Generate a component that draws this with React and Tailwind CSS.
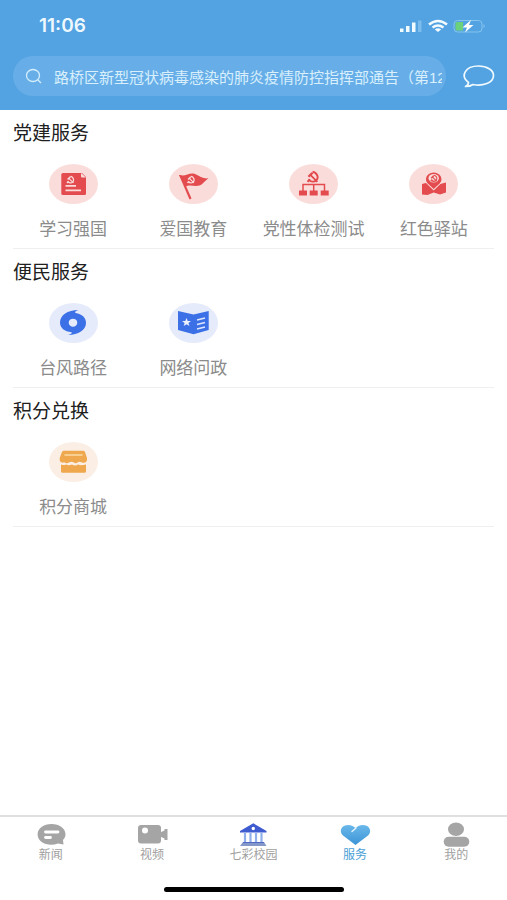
import React from "react";

function Emblem({ x, y, size, color }) {
  return (
    <svg x={x} y={y} width={size} height={size} viewBox="0 0 24 24" fill="none" stroke={color}>
      <path d="M12 2C21 4 24 13 19 18C15 22 9 21 5 17" strokeWidth="3.6" />
      <path d="M7 16L3 21" strokeWidth="4" />
      <path d="M8 8L21 21" strokeWidth="3.4" />
      <path d="M3 10L10 3L14 5L6 13Z" fill={color} stroke="none" />
    </svg>
  );
}

const red = "#e34b4e";
const pink = "#fadddb";

const StudyIcon = () => (
  <>
    <path d="M14 9H33L37 13V29.500Q37 31 35.500 31H14Q12.300 31 12.300 29.500V10.500Q12.300 9 14 9Z" fill={red} />
    <path d="M32 9L37 13.500H33Q32 13.500 32 12.500Z" fill={pink} />
    <Emblem x={17} y={11.500} size={8.500} color={pink} />
    <path d="M16.500 21.800H27M16.500 26.300H32" stroke={pink} strokeWidth="1.700" />
  </>
);

const FlagIcon = () => (
  <>
    <path d="M10 11C17 13 20 8 26 10C31 12 34 15 39.500 14.300C36 16.500 34 20.500 30.500 21.600C25 23 21 20 16.500 22.700Z" fill={red} />
    <path d="M10 11L12.500 11.500L22.500 34.500L20.500 35.500Z" fill={red} />
    <Emblem x={17.500} y={11.500} size={8.500} color={pink} />
  </>
);

const TreeIcon = () => (
  <>
    <Emblem x={17} y={6.500} size={13} color={red} />
    <path d="M14 27V20.500H35.500V27M24.700 20.500V27" fill="none" stroke={red} strokeWidth="1.500" />
    <path d="M10 26.500H18V31.500H10ZM20.700 26.500H28.700V31.500H20.700ZM31.700 26.500H39.700V31.500H31.700Z" fill={red} />
  </>
);

const MapIcon = () => (
  <>
    <path d="M13 20L18.500 18.500L24.700 20.500L31 20L37 18.500V28.500L31 30.500L24.700 28.500L18.500 31L13 30.500Z" fill={red} />
    <path d="M24.700 26.500L16.500 18.500Q14.500 7.500 24.700 6Q35 7.500 33 18.500Z" fill={pink} />
    <path d="M24.700 25L18.500 19.300A7.800 6.700 0 1 1 30.900 19.300Z" fill={red} />
    <ellipse cx="24.700" cy="14.300" rx="5.200" ry="4.200" fill={pink} />
    <Emblem x={20.700} y={10.300} size={8} color={red} />
  </>
);

const TyphoonIcon = () => (
  <path
    fillRule="evenodd"
    d="M29.500 7C26.500 8 25.500 9.300 26.500 10C33 11 37 14.500 37 20C37 27 29.500 31.800 19 32C22.500 31 23.500 30 22.500 29.300C15.500 28.500 11 25 11 19.500C11 12 18.500 7.200 29.500 7ZM24 15.700A4.300 4 0 1 0 24 23.700A4.300 4 0 1 0 24 15.700Z"
    fill="#3b70e6"
  />
);

const BookIcon = () => (
  <>
    <path d="M9 8L24.500 11.500L39.700 8V27L24.500 31.300L9 27Z" fill="#3b70e6" />
    <path d="M17.500 15L18.700 18H22L19.400 20L20.500 23L17.500 21.200L14.700 23L15.600 20L13 18H16.300Z" fill="#edf1ff" />
    <path d="M28 17L36 15M28 21.500L36 19.500M28 26L36 24" stroke="#dfe7ff" strokeWidth="1.600" />
  </>
);

const ShopIcon = () => (
  <>
    <path d="M15 8.700H34Q35.500 8.700 36 10L38 16V18.500Q36.500 22 32.500 20.300Q30.500 19 28.500 20.500Q26.500 22.200 24.500 20.300Q22.500 19 20 20.500Q17 22 15.500 20.300Q11.500 21.500 10.700 18.500V16L13 10Q13.500 8.700 15 8.700Z" fill="#efa84e" />
    <path d="M16 13H33" stroke="#fbdca8" strokeWidth="1.500" strokeLinecap="round" />
    <path d="M12 22.500Q15 23.500 17 22.500Q20 24 23 22.500Q26 24.500 29 22.500Q32 24 37 22.500V29.500Q37 30.700 35.500 30.700H13.500Q12 30.700 12 29.500Z" fill="#efa84e" />
  </>
);

const sections = [
  {
    title: "党建服务",
    items: [
      { label: "学习强国", Icon: StudyIcon, tint: "bg-[#fadddb]" },
      { label: "爱国教育", Icon: FlagIcon, tint: "bg-[#fadddb]" },
      { label: "党性体检测试", Icon: TreeIcon, tint: "bg-[#fadddb]" },
      { label: "红色驿站", Icon: MapIcon, tint: "bg-[#fadddb]" },
    ],
  },
  {
    title: "便民服务",
    items: [
      { label: "台风路径", Icon: TyphoonIcon, tint: "bg-[#e5ebfa]" },
      { label: "网络问政", Icon: BookIcon, tint: "bg-[#e5ebfa]" },
    ],
  },
  {
    title: "积分兑换",
    items: [{ label: "积分商城", Icon: ShopIcon, tint: "bg-[#fbeee4]" }],
  },
];

const NewsIcon = () => (
  <>
    <path d="M16.500 3C24.500 3 30.500 7.500 30.500 13.500C30.500 16 29 18 28 19L28.500 23.500L23 22.500C14 26 2.600 22 2.600 13.500C2.600 7.500 8.500 3 16.500 3Z" fill="#a5a5a5" />
    <path d="M10.500 11H23M10.500 16.500H15.500" stroke="#fff" strokeWidth="2.800" strokeLinecap="round" />
  </>
);

const VideoIcon = () => (
  <>
    <rect x="2" y="4" width="23" height="18.500" rx="3" fill="#a5a5a5" />
    <path d="M24 11.500L28.500 9.500V8H31.500V19H28.500V17.500L24 15.500Z" fill="#a5a5a5" />
    <circle cx="9" cy="9.500" r="3" fill="#fff" />
  </>
);

const SchoolIcon = () => (
  <>
    <path d="M16.300 2.300L29.500 10V11.500H3V10Z" fill="#3f5bd0" />
    <circle cx="16.300" cy="7.500" r="1.700" fill="#fff" />
    <path d="M8 12V21M13.500 12V21M19 12V21M24.500 12V21" stroke="#8fb0ec" strokeWidth="2.200" />
    <path d="M6 21H27L29.500 25H3Z" fill="#8497c9" />
    <path d="M6 21.500H27" stroke="#5069c6" />
  </>
);

const HeartIcon = () => (
  <>
    <defs>
      <linearGradient id="heart" x1="0" y1="0" x2="0" y2="1">
        <stop offset="0" stopColor="#6ab8ea" />
        <stop offset="1" stopColor="#3c94d6" />
      </linearGradient>
    </defs>
    <path d="M16.500 24L4 14.500C-0.500 10.500 2.500 4 9 4C12.500 4 15 5.500 16.500 7C18 5.500 20.500 4 24 4C30.500 4 33.500 10.500 29 14.500Z" fill="url(#heart)" />
    <path d="M17 7L13 10.500" stroke="#e6f5fd" strokeWidth="1.400" strokeLinecap="round" />
  </>
);

const ProfileIcon = () => (
  <>
    <ellipse cx="16" cy="8.300" rx="8" ry="6.700" fill="#a5a5a5" />
    <rect x="3.700" y="15.700" width="25.600" height="10" rx="5" fill="#a5a5a5" />
  </>
);

const tabs = [
  { label: "新闻", Icon: NewsIcon },
  { label: "视频", Icon: VideoIcon },
  { label: "七彩校园", Icon: SchoolIcon },
  { label: "服务", Icon: HeartIcon, active: true },
  { label: "我的", Icon: ProfileIcon },
];

function StatusBar() {
  return (
    <div className="flex h-13 items-center justify-between pr-5 pl-[39px]">
      <span className="font-['Inter','Liberation_Sans',sans-serif] text-[19px] leading-7 font-semibold text-[#eef9ff]">11:06</span>
      <svg width="88" height="16" viewBox="0 0 88 16" fill="none" aria-hidden="true">
        <path d="M1 10.500H4.500V14H1ZM7 8H10.500V14H7ZM13 4.500H16.500V14H13Z" fill="#f2fbff" />
        <path d="M19 2.500H22.500V14H19Z" fill="#7bbcec" />
        <path d="M30 6.500Q39 -0.500 48 6.500" stroke="#f2fbff" strokeWidth="2.600" />
        <path d="M33.500 9.500Q39 5.500 44.500 9.500" stroke="#f2fbff" strokeWidth="2.400" />
        <path d="M39 14L35.800 11.500Q39 9 42.200 11.500Z" fill="#f2fbff" />
        <rect x="55" y="2.500" width="28" height="11.500" rx="3.500" stroke="#86c6ee" />
        <path d="M58 4H64V12.500H58Q56.500 12.500 56.500 11V5.500Q56.500 4 58 4Z" fill="#6bd17b" />
        <path d="M84.500 6Q87 8 84.500 10Z" fill="#86c6ee" />
        <path d="M72 2L63.500 9.500H68L66 14.500L74.500 7H70Z" fill="#fff" />
      </svg>
    </div>
  );
}

export default function App() {
  return (
    <div className="flex min-h-screen flex-col bg-white font-['Liberation_Sans','Noto_Sans_CJK_SC',sans-serif]">
      <header className="bg-[#53a2e1] pb-[14px]">
        <StatusBar />
        <div className="flex items-center gap-4 pt-1 pr-3 pl-[13px]">
          <label className="flex h-10 min-w-0 flex-1 items-center gap-3 rounded-full bg-[#67aee8] pr-1 pl-3">
            <svg width="17" height="16" viewBox="0 0 17 16" fill="none" stroke="#d3eefb" strokeWidth="1.300" aria-hidden="true">
              <ellipse cx="8" cy="7.500" rx="6.500" ry="6" />
              <path d="M12.500 11.500L16 15" />
            </svg>
            <input
              type="text"
              aria-label="搜索"
              defaultValue="路桥区新型冠状病毒感染的肺炎疫情防控指挥部通告（第12号）"
              className="h-6 min-w-0 flex-1 bg-transparent text-[15px] text-[#d9f0fc] outline-none"
            />
          </label>
          <button type="button" aria-label="消息" className="shrink-0">
            <svg width="33" height="24" viewBox="0 0 33 24" fill="none" stroke="#effaff" strokeWidth="1.700" strokeLinejoin="round">
              <path d="M6.500 18.500C-2 12 3 2 16.500 2C25 2 31.500 6 31.500 11.500C31.500 19 20.500 22.500 11 20.500C9 22 6 22.500 3.500 22.500C5.500 21.500 6.500 20 6.500 18.500Z" />
            </svg>
          </button>
        </div>
      </header>

      <main className="flex-1 px-[13px]">
        {sections.map(({ title, items }) => (
          <section key={title} className="border-b border-[#efefef] pt-3 pb-[6px]">
            <h2 className="text-[19px] leading-6 text-[#202020]">{title}</h2>
            <div className="mt-[18px] grid grid-cols-4">
              {items.map(({ label, Icon, tint }) => (
                <button key={label} type="button" className="flex flex-col items-center gap-[14px]">
                  <span className={`block rounded-[50%] ${tint}`}>
                    <svg className="block" width="49" height="40" viewBox="0 0 49 40" aria-hidden="true">
                      <Icon />
                    </svg>
                  </span>
                  <span className="text-[17px] leading-6 whitespace-nowrap text-[#8b8b8b]">{label}</span>
                </button>
              ))}
            </div>
          </section>
        ))}
      </main>

      <footer className="border-t-2 border-[#e0e0e0] pt-1 pb-2">
        <nav className="grid grid-cols-5">
          {tabs.map(({ label, Icon, active }) => (
            <button
              key={label}
              type="button"
              aria-current={active ? "page" : undefined}
              className={`flex flex-col items-center ${active ? "text-[#4a9fd6]" : "text-[#a0a0a0]"}`}
            >
              <svg width="32" height="26" viewBox="0 0 32 26" aria-hidden="true">
                <Icon />
              </svg>
              <span className="text-xs leading-4">{label}</span>
            </button>
          ))}
        </nav>
        <div className="mx-auto mt-6 h-[5px] w-[180px] rounded-full bg-black" />
      </footer>
    </div>
  );
}
